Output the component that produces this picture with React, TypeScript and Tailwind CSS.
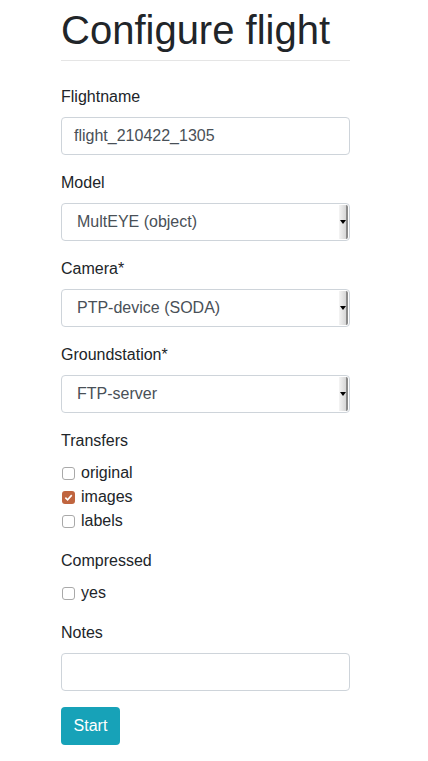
import React from "react";

const font = { fontFamily: '"Liberation Sans", Arial, sans-serif' };

const Label = ({ children }: { children: React.ReactNode }) => (
    <div className="text-[16px] leading-[24px] text-[#212529] mb-2">{children}</div>
);

const SelectBox = ({ value }: { value: string }) => (
    <div className="relative flex items-center h-[38px] w-full border border-[#ced4da] rounded-[4px] bg-white pl-[15px] text-[16px] text-[#495057]">
        {value}
        <div className="absolute right-[1px] top-[1px] bottom-[1px] w-[9px] flex items-center justify-center bg-gradient-to-r from-[#f4f4f4] to-[#d6d6d6] border-r-2 border-[#8a8a8a] rounded-r-[2px]">
            <div className="w-0 h-0 border-l-[3px] border-r-[3px] border-t-[4px] border-l-transparent border-r-transparent border-t-black" />
        </div>
    </div>
);

const Check = ({ label, checked }: { label: string; checked?: boolean }) => (
    <div className="flex items-center h-[24px] text-[16px] text-[#212529]">
        {checked ? (
            <span className="ml-[1px] w-[13px] h-[13px] rounded-[3px] bg-[#c0653f] flex items-center justify-center">
                <svg width="9" height="9" viewBox="0 0 10 10">
                    <path d="M1.5 5.2 L4 7.6 L8.6 2.4" stroke="white" strokeWidth="1.8" fill="none" />
                </svg>
            </span>
        ) : (
            <span className="ml-[1px] w-[13px] h-[13px] rounded-[3px] border border-[#a9a9a9] bg-white" />
        )}
        <span className="ml-[6px]">{label}</span>
    </div>
);

const App = () => {
    return (
        <div className="min-h-screen w-full bg-white" style={font}>
            <div className="w-[289px] ml-[61px] pt-[1px]">
                <h1 className="text-[40px] leading-[48px] text-[#212529] mt-[5px] mb-[6px]">Configure flight</h1>
                <div className="h-px bg-[#e5e5e5]" />
                <div className="mt-[24px]">
                    <Label>Flightname</Label>
                    <div className="flex items-center h-[38px] border border-[#ced4da] rounded-[4px] px-3 text-[16px] text-[#495057]">
                        flight_210422_1305
                    </div>
                </div>
                <div className="mt-4">
                    <Label>Model</Label>
                    <SelectBox value="MultEYE (object)" />
                </div>
                <div className="mt-4">
                    <Label>Camera*</Label>
                    <SelectBox value="PTP-device (SODA)" />
                </div>
                <div className="mt-4">
                    <Label>Groundstation*</Label>
                    <SelectBox value="FTP-server" />
                </div>
                <div className="mt-4">
                    <Label>Transfers</Label>
                    <Check label="original" />
                    <Check label="images" checked />
                    <Check label="labels" />
                </div>
                <div className="mt-4">
                    <Label>Compressed</Label>
                    <Check label="yes" />
                </div>
                <div className="mt-4">
                    <Label>Notes</Label>
                    <div className="h-[38px] border border-[#ced4da] rounded-[4px]" />
                </div>
                <button className="mt-4 h-[38px] w-[59px] rounded-[4px] bg-[#17a2b8] text-white text-[16px]" style={font}>
                    Start
                </button>
            </div>
        </div>
    );
};

export default App;
